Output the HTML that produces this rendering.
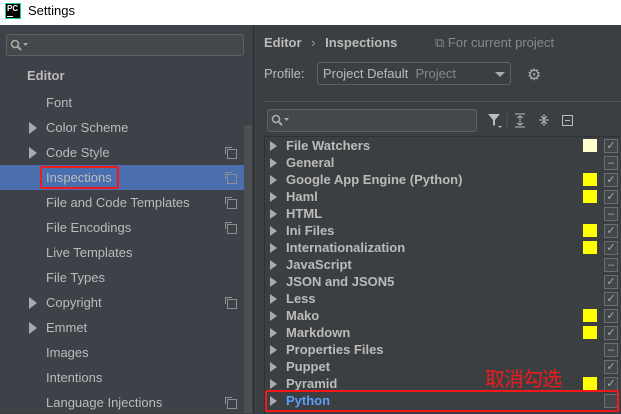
<html><head><style>
body{margin:0;width:621px;height:413px;overflow:hidden;background:#3c3f41;font-family:"Liberation Sans","Microsoft YaHei",sans-serif;position:relative}
.a{position:absolute}
.title{left:0;top:0;width:621px;height:25px;background:#fff}
.left{left:0;top:25px;width:253px;height:388px;background:#3e4147}
.lt{position:absolute;color:#bbbbbb;font-size:13px;white-space:nowrap;margin-top:1px}
.tri{position:absolute;width:0;height:0;border-left:8px solid #a9abad;border-top:6px solid transparent;border-bottom:6px solid transparent;margin-top:-1px}
.cp{position:absolute;width:8px;height:8px;border:1px solid #8c8e90;left:227px}
.cp:before{content:"";position:absolute;left:-3px;top:-3px;width:6px;height:6px;border-left:1px solid #8c8e90;border-top:1px solid #8c8e90}
.rt{position:absolute;left:286px;color:#bbbbbb;font-size:13px;font-weight:bold;white-space:nowrap}
.rtri{position:absolute;left:270px;width:0;height:0;border-left:7px solid #a9abad;border-top:5px solid transparent;border-bottom:5px solid transparent;margin-top:-1px}
.cb{position:absolute;left:604px;width:12px;height:12px;border:1px solid #6b6d6f;background:#43464a;color:#aaa;font-size:11px;line-height:12px;text-align:center}
.y{position:absolute;left:583px;width:14px;height:13px;background:#ffff00}
</style></head><body>
<div class="a title"></div>
<div class="a" style="left:5px;top:3px;width:16px;height:16px;background:#000;border:1px solid #21d789;box-sizing:border-box;color:#fff;font-size:8px;font-weight:bold;line-height:9px;padding-left:1px">PC<div style="width:6px;height:1px;background:#fff;margin-top:3px"></div></div>
<div class="a" style="left:28px;top:3px;font-size:13px;color:#000">Settings</div>
<div class="a left"></div>
<div class="a" style="left:6px;top:34px;width:238px;height:22px;border:1px solid #5e6063;border-radius:3px;background:#45484a;box-sizing:border-box"></div>
<svg class="a" style="left:10px;top:39px" width="20" height="12"><circle cx="5" cy="5" r="3.5" stroke="#aaa" stroke-width="1.6" fill="none"/><line x1="8" y1="8" x2="11" y2="11" stroke="#aaa" stroke-width="2"/><path d="M13 4h5l-2.5 3z" fill="#aaa"/></svg>
<div class="lt" style="left:27px;top:67px;font-weight:bold">Editor</div>
<div class="a" style="left:244px;top:125px;width:8px;height:288px;background:#4b4e53"></div>
<div class="a" style="left:0;top:165px;width:244px;height:25px;background:#4b6eaf"></div>
<div class="a" style="left:253px;top:25px;width:1px;height:388px;background:#2b2b2b"></div>
<div class="lt" style="left:46px;top:94px">Font</div>
<div class="tri" style="left:29px;top:123px"></div><div class="lt" style="left:46px;top:119px">Color Scheme</div>
<div class="tri" style="left:29px;top:148px"></div><div class="lt" style="left:46px;top:144px">Code Style</div><div class="cp" style="top:149px"></div>
<div class="lt" style="left:46px;top:169px">Inspections</div><div class="cp" style="top:174px"></div>
<div class="a" style="left:40px;top:166px;width:79px;height:23px;border:2px solid #f01a1a;border-radius:2px;box-sizing:border-box"></div>
<div class="lt" style="left:46px;top:194px">File and Code Templates</div><div class="cp" style="top:199px"></div>
<div class="lt" style="left:46px;top:219px">File Encodings</div><div class="cp" style="top:224px"></div>
<div class="lt" style="left:46px;top:244px">Live Templates</div>
<div class="lt" style="left:46px;top:269px">File Types</div>
<div class="tri" style="left:29px;top:298px"></div><div class="lt" style="left:46px;top:294px">Copyright</div><div class="cp" style="top:299px"></div>
<div class="tri" style="left:29px;top:323px"></div><div class="lt" style="left:46px;top:319px">Emmet</div>
<div class="lt" style="left:46px;top:344px">Images</div>
<div class="lt" style="left:46px;top:369px">Intentions</div>
<div class="lt" style="left:46px;top:394px">Language Injections</div><div class="cp" style="top:399px"></div>

<div class="a" style="left:264px;top:35px;color:#bbb;font-size:13px;font-weight:bold">Editor <span style="font-weight:normal;color:#999;margin:0 6px">›</span> Inspections</div>
<div class="a" style="left:435px;top:35px;color:#888;font-size:13px">⧉ For current project</div>
<div class="a" style="left:264px;top:66px;color:#bbb;font-size:13px">Profile:</div>
<div class="a" style="left:317px;top:62px;width:194px;height:23px;border:1px solid #5e6063;border-radius:3px;box-sizing:border-box;background:#3c3f41"></div>
<div class="a" style="left:323px;top:66px;color:#bbb;font-size:13px">Project Default <span style="color:#888">&nbsp;Project</span></div>
<div class="a" style="left:495px;top:72px;border-top:5px solid #aaa;border-left:5px solid transparent;border-right:5px solid transparent"></div>
<div class="a" style="left:527px;top:65px;color:#aaa;font-size:16px">⚙</div>
<div class="a" style="left:264px;top:101px;width:357px;height:1px;background:#515355"></div>
<div class="a" style="left:267px;top:109px;width:210px;height:23px;border:1px solid #5e6063;border-radius:3px;background:#45484a;box-sizing:border-box"></div>
<svg class="a" style="left:271px;top:114px" width="20" height="12"><circle cx="5" cy="5" r="3.5" stroke="#aaa" stroke-width="1.6" fill="none"/><line x1="8" y1="8" x2="11" y2="11" stroke="#aaa" stroke-width="2"/><path d="M13 4h5l-2.5 3z" fill="#aaa"/></svg>
<svg class="a" style="left:487px;top:112px" width="110" height="18"><path d="M1 2h12l-5 6v6l-2-1v-5z" fill="#bbb"/><path d="M11 14h4l-2 2z" fill="#bbb"/><line x1="20" y1="1" x2="20" y2="17" stroke="#555"/><path d="M28 2h10M28 15h10M33 4v9M30 6l3-2 3 2M30 11l3 2 3-2" stroke="#bbb" fill="none"/><path d="M52 8h10M57 2v5M54 4l3 3 3-3M57 14v-4M54 12l3-3 3 3" stroke="#bbb" fill="none"/><rect x="75.5" y="3.5" width="10" height="10" stroke="#bbb" fill="none"/><line x1="78" y1="8.5" x2="83" y2="8.5" stroke="#bbb"/></svg>
<div class="a" style="left:264px;top:136px;width:357px;height:277px;border-left:1px solid #2f3133;border-top:1px solid #2f3133"></div>

<div class="rtri" style="top:142px"></div><div class="rt" style="top:138px">File Watchers</div><div class="a" style="left:583px;top:139px;width:14px;height:13px;background:#ffffd0"></div><div class="cb" style="top:139px">✓</div>
<div class="rtri" style="top:159px"></div><div class="rt" style="top:155px">General</div><div class="cb" style="top:156px">–</div>
<div class="rtri" style="top:176px"></div><div class="rt" style="top:172px">Google App Engine (Python)</div><div class="y" style="top:173px"></div><div class="cb" style="top:173px">✓</div>
<div class="rtri" style="top:193px"></div><div class="rt" style="top:189px">Haml</div><div class="y" style="top:190px"></div><div class="cb" style="top:190px">✓</div>
<div class="rtri" style="top:210px"></div><div class="rt" style="top:206px">HTML</div><div class="cb" style="top:207px">–</div>
<div class="rtri" style="top:227px"></div><div class="rt" style="top:223px">Ini Files</div><div class="y" style="top:224px"></div><div class="cb" style="top:224px">✓</div>
<div class="rtri" style="top:244px"></div><div class="rt" style="top:240px">Internationalization</div><div class="y" style="top:241px"></div><div class="cb" style="top:241px">✓</div>
<div class="rtri" style="top:261px"></div><div class="rt" style="top:257px">JavaScript</div><div class="cb" style="top:258px">–</div>
<div class="rtri" style="top:278px"></div><div class="rt" style="top:274px">JSON and JSON5</div><div class="cb" style="top:275px">✓</div>
<div class="rtri" style="top:295px"></div><div class="rt" style="top:291px">Less</div><div class="cb" style="top:292px">✓</div>
<div class="rtri" style="top:312px"></div><div class="rt" style="top:308px">Mako</div><div class="y" style="top:309px"></div><div class="cb" style="top:309px">✓</div>
<div class="rtri" style="top:329px"></div><div class="rt" style="top:325px">Markdown</div><div class="y" style="top:326px"></div><div class="cb" style="top:326px">✓</div>
<div class="rtri" style="top:346px"></div><div class="rt" style="top:342px">Properties Files</div><div class="cb" style="top:343px">–</div>
<div class="rtri" style="top:363px"></div><div class="rt" style="top:359px">Puppet</div><div class="cb" style="top:360px">✓</div>
<div class="rtri" style="top:380px"></div><div class="rt" style="top:376px">Pyramid</div><div class="y" style="top:377px"></div><div class="cb" style="top:377px">✓</div>
<div class="rtri" style="top:397px"></div><div class="rt" style="top:393px;color:#589df6">Python</div><div class="cb" style="top:394px"></div>
<div class="a" style="left:265px;top:390px;width:354px;height:22px;border:2px solid #f01a1a;border-radius:2px;box-sizing:border-box"></div>
<div class="a" style="left:485px;top:366px;color:#f01a1a;font-size:20px;font-family:'Noto Sans CJK SC',sans-serif;line-height:24px;letter-spacing:-1px">取消勾选</div>
</body></html>
